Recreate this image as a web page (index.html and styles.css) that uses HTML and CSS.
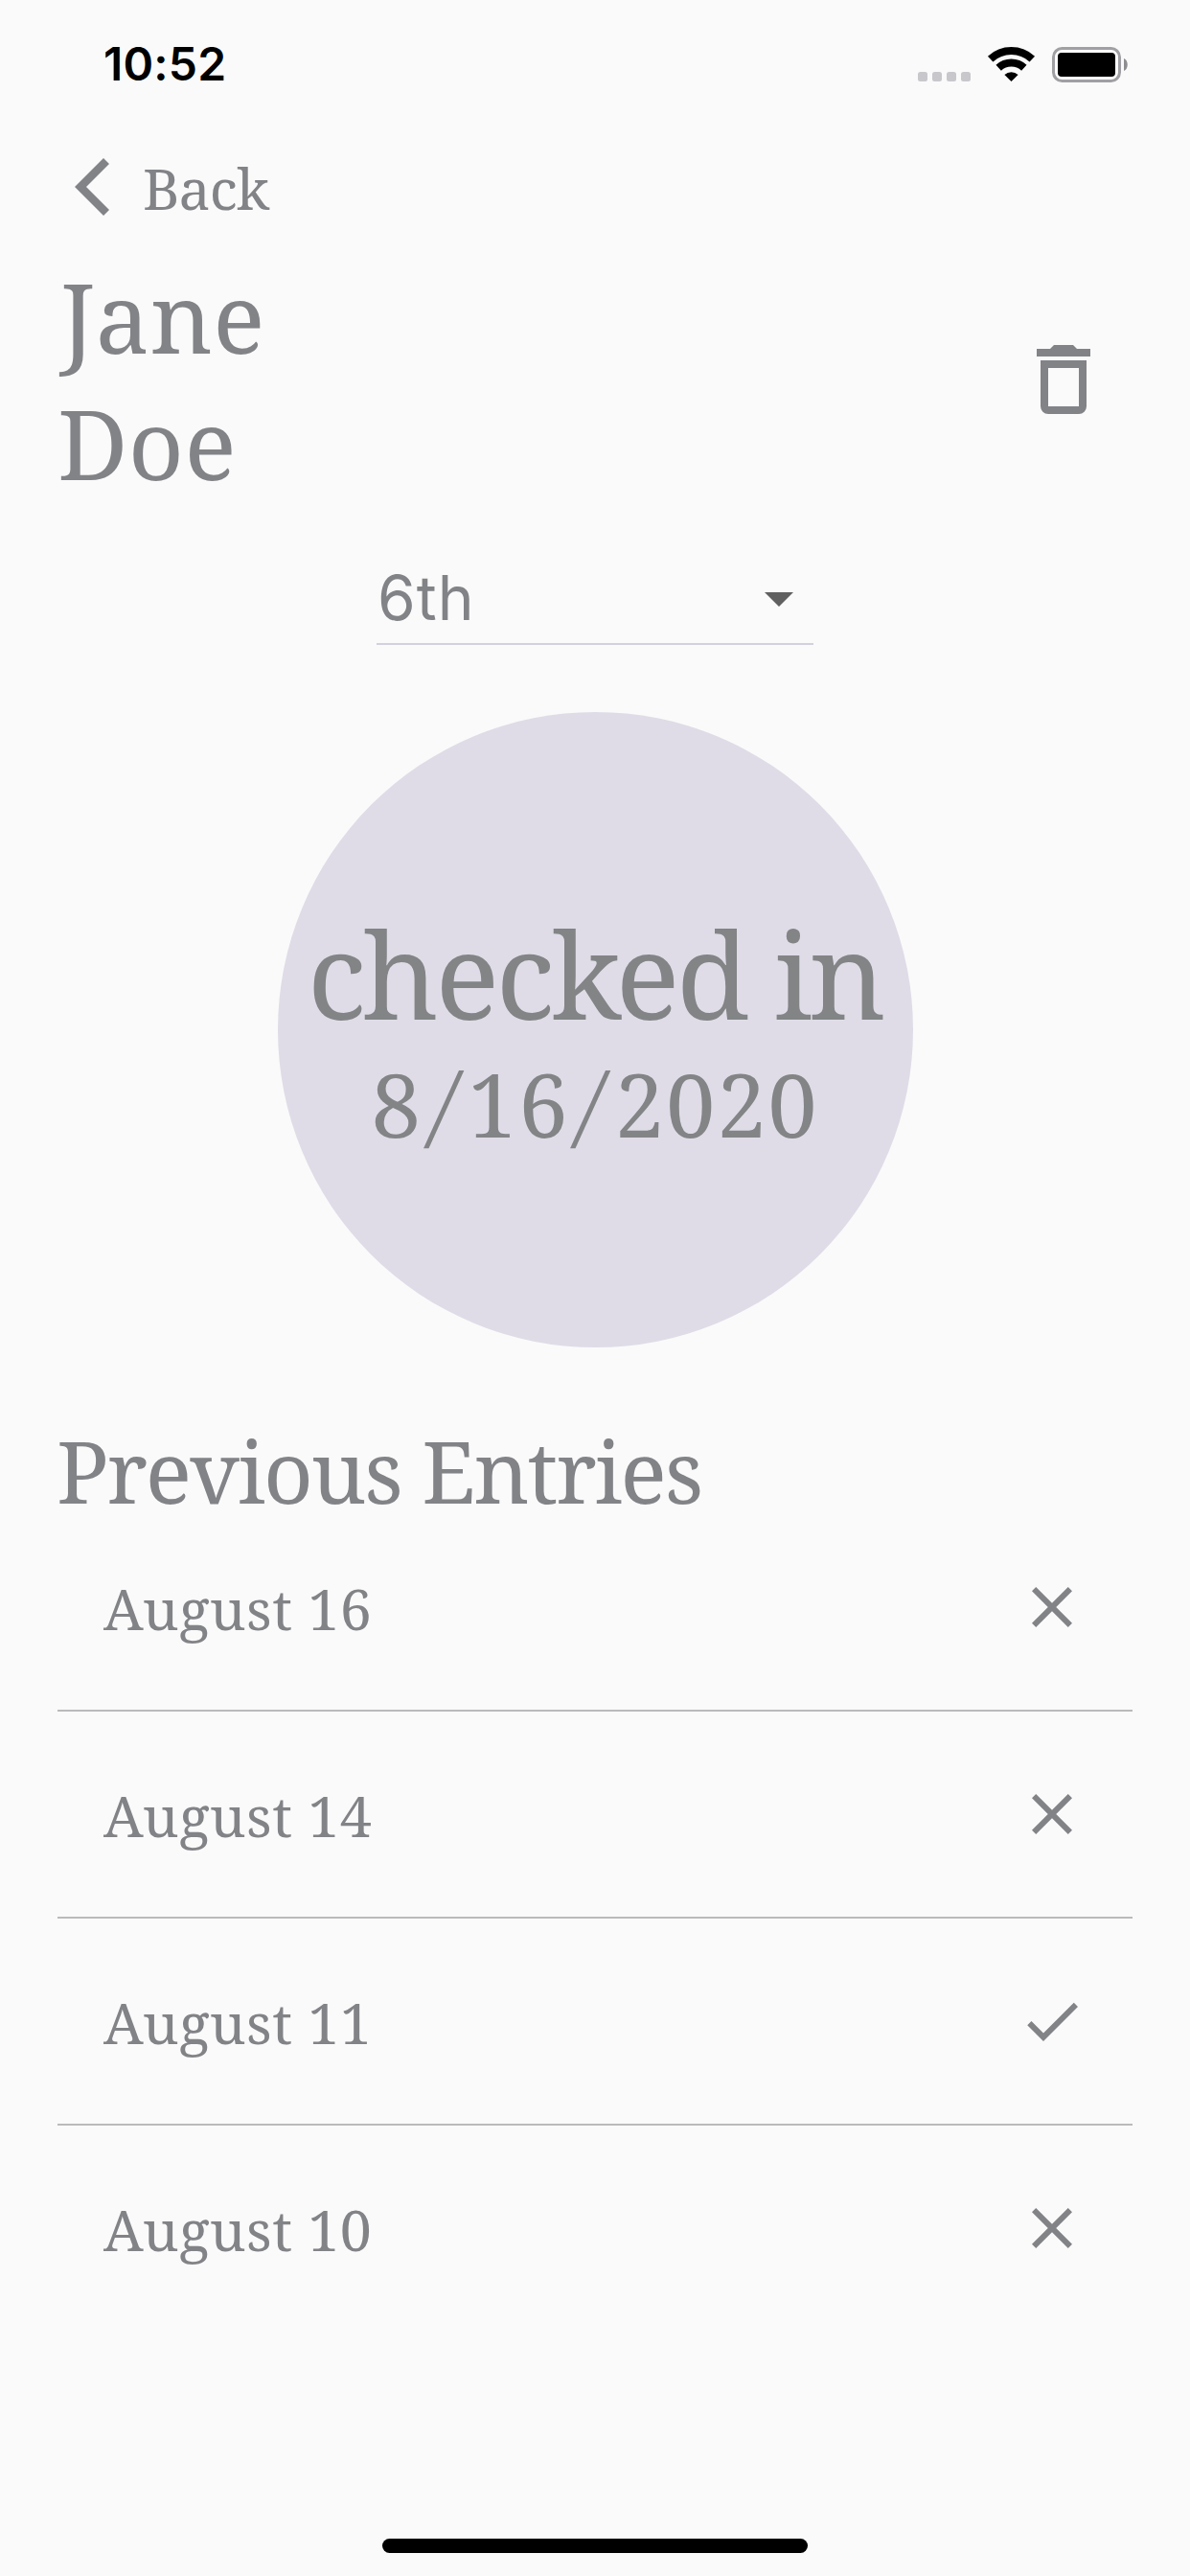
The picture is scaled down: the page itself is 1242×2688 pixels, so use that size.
FILE: index.html
```
<!DOCTYPE html>
<html lang="en">
<head>
  <meta charset="UTF-8">
  <title>Jane Doe</title>
  <link rel="stylesheet" href="styles.css">
</head>
<body>
  <div class="status-bar">
    <span class="time">10:52</span>
    <svg class="status-icons" width="220" height="38" viewBox="0 0 220 38">
      <g fill="#c8c7cc">
        <rect x="0" y="26" width="10" height="10" rx="2.5"/>
        <rect x="15" y="26" width="10" height="10" rx="2.5"/>
        <rect x="30" y="26" width="10" height="10" rx="2.5"/>
        <rect x="45" y="26" width="10" height="10" rx="2.5"/>
      </g>
      <g fill="none" stroke="#000" stroke-width="8">
        <path d="M75.7 12.6A32 32 0 0 1 119.3 12.6"/>
        <path d="M84.2 21.7A19.5 19.5 0 0 1 110.8 21.7"/>
      </g>
      <path d="M97.5 36L90.4 28.9A10.5 10.5 0 0 1 104.6 28.9z"/>
      <rect x="141.5" y="1.5" width="69" height="34" rx="9" fill="#fff" stroke="#a0a0a4" stroke-width="3"/>
      <rect x="146" y="6" width="60" height="25" rx="4"/>
      <path d="M215 12C220 14 220 23 215 25z" fill="#8e8e92"/>
    </svg>
  </div>

  <div class="back">
    <svg width="36" height="72" viewBox="0 0 12 24">
      <path d="M10 2l2 2-8 8 8 8-2 2L0 12z"/>
    </svg>
    <span>Back</span>
  </div>

  <div class="header">
    <h1><span class="first-name">Jane</span><br>Doe</h1>
    <svg class="trash" width="96" height="96" viewBox="0 0 24 24">
      <path fill-rule="evenodd" d="M6 19a2 2 0 0 0 2 2h8a2 2 0 0 0 2-2V7H6v12zM8 9h8v10H8V9zm7.5-5l-1-1h-5l-1 1H5v2h14V4h-3.5z"/>
    </svg>
  </div>

  <div class="grade">
    <span>6th</span>
    <svg width="30" height="15" viewBox="0 0 10 5"><path d="M0 0l5 5 5-5z"/></svg>
  </div>

  <div class="circle">
    <div class="state">checked in</div>
    <div class="date">8<span class="slash">/</span>16<span class="slash">/</span>2020</div>
  </div>

  <h2>Previous Entries</h2>
  <ul class="entries">
    <li>
      <span>August 16</span>
      <svg width="72" height="72" viewBox="0 0 24 24"><path d="M19 6.41L17.59 5 12 10.59 6.41 5 5 6.41 10.59 12 5 17.59 6.41 19 12 13.41 17.59 19 19 17.59 13.41 12z"/></svg>
    </li>
    <li>
      <span>August 14</span>
      <svg width="72" height="72" viewBox="0 0 24 24"><path d="M19 6.41L17.59 5 12 10.59 6.41 5 5 6.41 10.59 12 5 17.59 6.41 19 12 13.41 17.59 19 19 17.59 13.41 12z"/></svg>
    </li>
    <li>
      <span>August 11</span>
      <svg width="72" height="72" viewBox="0 0 24 24"><path d="M9 16.17L4.83 12l-1.42 1.41L9 19 21 7l-1.41-1.41z"/></svg>
    </li>
    <li>
      <span>August 10</span>
      <svg width="72" height="72" viewBox="0 0 24 24"><path d="M19 6.41L17.59 5 12 10.59 6.41 5 5 6.41 10.59 12 5 17.59 6.41 19 12 13.41 17.59 19 19 17.59 13.41 12z"/></svg>
    </li>
  </ul>

  <div class="home-bar"></div>
</body>
</html>
```
FILE: styles.css
```
* {
  box-sizing: border-box;
}
body {
  display: flex;
  flex-direction: column;
  height: 2688px;
  margin: 0;
  padding: 0 60px 24px;
  background-color: #fafafa;
  color: #828387;
  font-family: "Noto Serif", "DejaVu Serif Condensed", "DejaVu Serif", serif;
}
svg {
  display: block;
  flex: none;
}
h1, h2 {
  margin: 0;
  font-weight: normal;
}
.status-bar {
  display: flex;
  justify-content: space-between;
  height: 159px;
  padding: 37px 4px 0 48px;
}
.time {
  color: #000;
  font: 600 48px/60px Inter, sans-serif;
  letter-spacing: 0.2px;
}
.status-icons {
  margin-top: 12px;
}
.back {
  display: flex;
  gap: 35px;
  height: 80px;
  padding-left: 18px;
  font-size: 59px;
  line-height: 74px;
  letter-spacing: -1px;
}
.back svg, .trash, .entries svg {
  fill: #828387;
}
.header {
  display: flex;
  justify-content: space-between;
  margin-top: 25px;
  padding-right: 24px;
}
h1 {
  font-size: 101px;
  line-height: 132px;
  letter-spacing: 0.4px;
}
.first-name {
  margin-left: 3px;
}
.trash {
  margin-top: 84px;
}
.grade {
  display: flex;
  justify-content: space-between;
  align-self: center;
  width: 456px;
  height: 85px;
  margin-top: 60px;
  padding: 0 21px 0 1px;
  border-bottom: 2px solid #d3d1dd;
  font: 64px/72px Inter, sans-serif;
  letter-spacing: 1px;
}
.grade svg {
  margin-top: 30px;
  fill: #606060;
}
.circle {
  flex: none;
  align-self: center;
  width: 663px;
  height: 663px;
  margin-top: 70px;
  padding-top: 198px;
  border-radius: 50%;
  background-color: #dfdce7;
  color: #828486;
  text-align: center;
  white-space: nowrap;
}
.state {
  font-size: 125px;
  line-height: 150px;
  letter-spacing: -3.6px;
}
.date {
  margin-top: 4px;
  font-size: 92px;
  line-height: 114px;
  letter-spacing: 1.8px;
}
.slash {
  display: inline-block;
  padding: 0 9px 0 10px;
  transform: skewX(-11deg);
}
h2 {
  margin: 96px 0 4px -1px;
  font-size: 90px;
  line-height: 64px;
  letter-spacing: -1.95px;
}
.entries {
  margin: 0;
  padding: 0;
  list-style: none;
}
.entries li {
  display: flex;
  justify-content: space-between;
  align-items: center;
  height: 216px;
  padding: 0 48px;
  border-bottom: 2px solid #bababc;
  font-size: 59px;
  letter-spacing: 0.5px;
}
.entries span {
  padding-top: 1px;
}
.entries li:last-child {
  border-bottom-color: transparent;
}
.home-bar {
  align-self: center;
  width: 444px;
  height: 15px;
  margin-top: auto;
  border-radius: 8px;
  background-color: #000;
}
```
